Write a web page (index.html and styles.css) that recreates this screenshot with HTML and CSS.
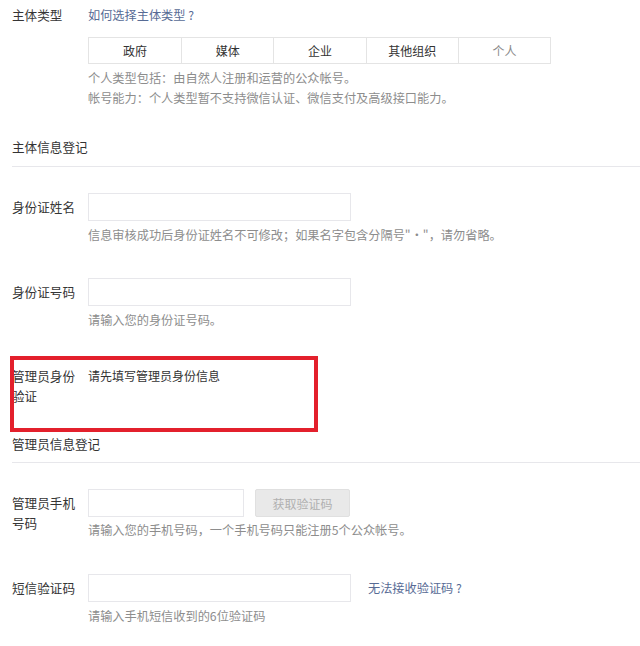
FILE: index.html
```html
<!DOCTYPE html>
<html lang="zh-CN">

<head>
  <meta charset="UTF-8" />
  <meta name="viewport" content="width=device-width, initial-scale=1.0" />
  <title>注册信息</title>
  <link rel="stylesheet" href="styles.css">
</head>

<body>
  <article class="form">
    <section class="row type-row">
      <div class="label">主体类型</div>
      <div class="field">
        <a class="link">如何选择主体类型 ?</a>
        <div class="types">
          <div>政府</div>
          <div>媒体</div>
          <div>企业</div>
          <div>其他组织</div>
          <div class="current">个人</div>
        </div>
        <p class="tips">个人类型包括：由自然人注册和运营的公众帐号。<br>帐号能力：个人类型暂不支持微信认证、微信支付及高级接口能力。</p>
      </div>
    </section>

    <h3 class="title first">主体信息登记</h3>

    <section class="row input-row name-row">
      <div class="label">身份证姓名</div>
      <div class="field">
        <input class="input" type="text">
        <p class="tips">信息审核成功后身份证姓名不可修改；如果名字包含分隔号"·"，请勿省略。</p>
      </div>
    </section>

    <section class="row input-row id-row">
      <div class="label">身份证号码</div>
      <div class="field">
        <input class="input" type="text">
        <p class="tips">请输入您的身份证号码。</p>
      </div>
    </section>

    <section class="row verify-row">
      <div class="label">管理员身份验证</div>
      <div class="field">
        <span class="text">请先填写管理员身份信息</span>
      </div>
      <div class="mark"></div>
    </section>

    <h3 class="title second">管理员信息登记</h3>

    <section class="row input-row phone-row">
      <div class="label">管理员手机号码</div>
      <div class="field">
        <div class="inline">
          <input class="input short" type="text">
          <button class="btn" disabled>获取验证码</button>
        </div>
        <p class="tips">请输入您的手机号码，一个手机号码只能注册5个公众帐号。</p>
      </div>
    </section>

    <section class="row input-row sms-row">
      <div class="label">短信验证码</div>
      <div class="field">
        <div class="inline">
          <input class="input" type="text">
          <a class="link side">无法接收验证码 ?</a>
        </div>
        <p class="tips">请输入手机短信收到的6位验证码</p>
      </div>
    </section>
  </article>
</body>

</html>
```

FILE: styles.css
```css
body {
  margin: 0;
  background-color: #fff;
  color: #333;
  font-family: "Noto Sans CJK SC", "Noto Sans", sans-serif;
  font-size: 12px;
}

.form {
  padding: 5px 0 0 12px;
}

.row {
  display: grid;
  grid-template-columns: 64px 1fr;
  column-gap: 12px;
  position: relative;
}

.label {
  font-size: 12.6px;
  line-height: 20px;
  color: #353535;
}

.input-row .label {
  padding-top: 4px;
}

.link {
  color: #576b95;
  font-size: 12.2px;
  line-height: 20px;
  text-decoration: none;
  cursor: pointer;
}

.types {
  display: grid;
  grid-template-columns: repeat(5, 1fr);
  width: 461px;
  height: 25px;
  margin-top: 12px;
  border: 1px solid #e4e4e4;
}

.types div {
  line-height: 25px;
  text-align: center;
  color: #333;
}

.types div + div {
  border-left: 1px solid #e4e4e4;
}

.types .current {
  color: #8a8a8a;
}

.tips {
  margin: 4px 0 0;
  font-size: 12.2px;
  line-height: 20px;
  color: #8d8d8d;
}

.title {
  margin: 0;
  padding-bottom: 9px;
  font-size: 12.6px;
  font-weight: normal;
  line-height: 20px;
  border-bottom: 1px solid #e7e7eb;
}

.title.first {
  margin-top: 29px;
}

.title.second {
  margin-top: 28px;
  padding-bottom: 8px;
}

.input {
  display: block;
  box-sizing: border-box;
  width: 263px;
  height: 28px;
  margin: 0;
  border: 1px solid #e7e7eb;
  outline: none;
}

.input.short {
  width: 156px;
}

.inline {
  display: flex;
  align-items: center;
}

.btn {
  box-sizing: border-box;
  width: 95px;
  height: 28px;
  margin-left: 11px;
  padding: 0;
  border: 1px solid #e0e0e0;
  border-radius: 2px;
  background-color: #e9e9e9;
  color: #b0b0b0;
  font-family: inherit;
  font-size: 12px;
}

.side {
  margin-left: 17px;
}

.name-row {
  margin-top: 26px;
}

.id-row {
  margin-top: 33px;
}

.verify-row {
  margin-top: 36px;
}

.verify-row .text {
  line-height: 20px;
  color: #333;
}

.phone-row {
  margin-top: 26px;
}

.phone-row .tips {
  margin-top: 3px;
}

.sms-row {
  margin-top: 34px;
}

.mark {
  position: absolute;
  left: -2px;
  top: -10px;
  width: 308px;
  height: 76px;
  box-sizing: border-box;
  border: 4px solid #e3202c;
}
```
